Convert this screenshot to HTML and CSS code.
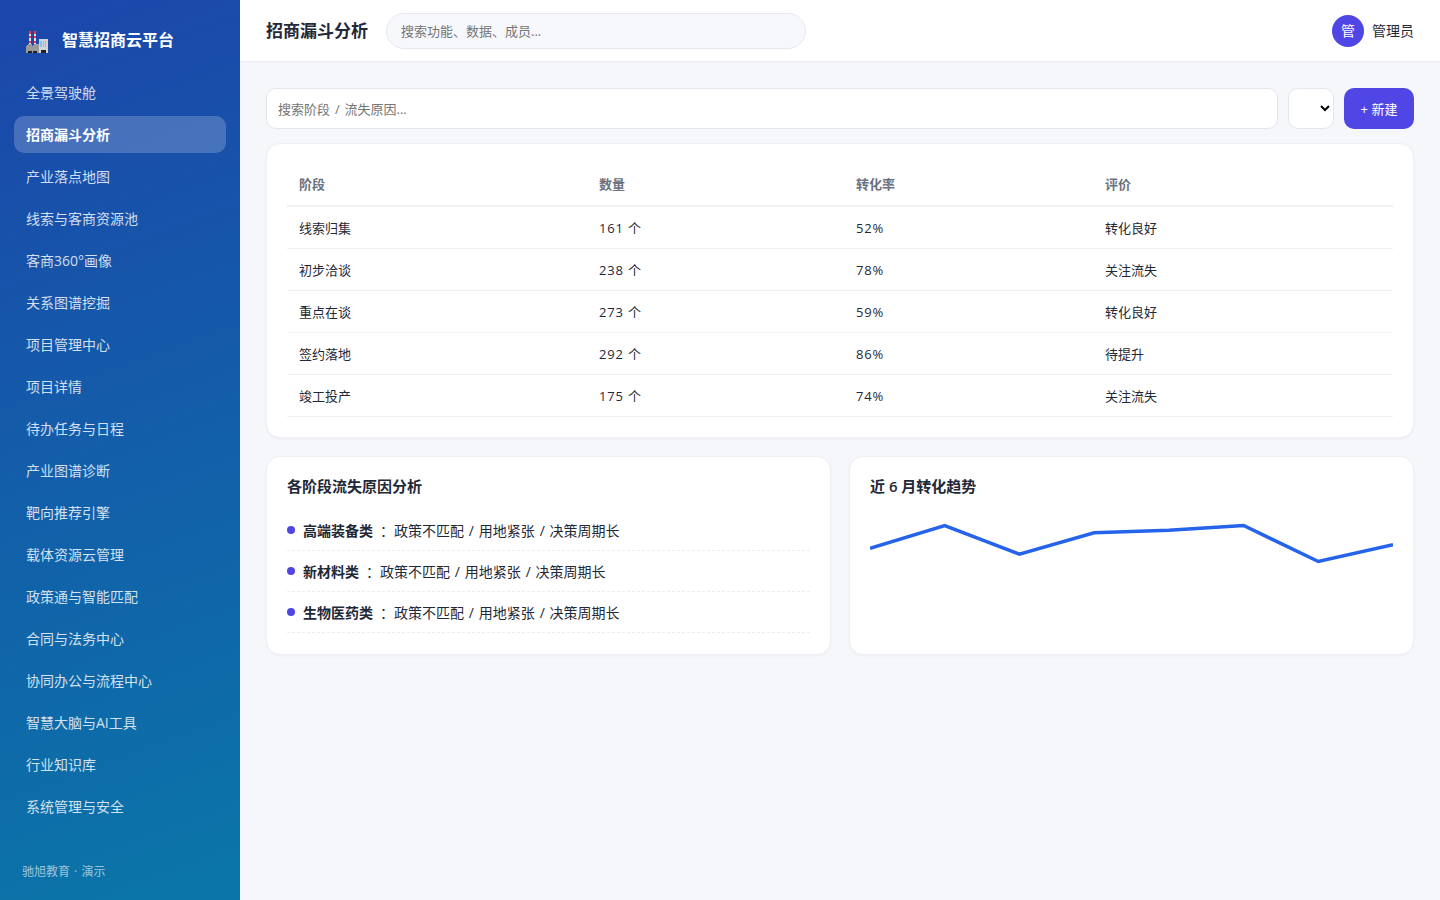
FILE: index.html
```html
<!DOCTYPE html>
<html lang="zh-CN">
<head>
    <meta charset="UTF-8">
    <meta name="viewport" content="width=device-width, initial-scale=1.0">
    <title>招商漏斗分析 - 智慧招商云平台</title>
    <link rel="stylesheet" href="styles.css">
</head>
<body>
    <aside class="sidebar">
        <div class="brand">
            <svg class="brand-icon" viewBox="0 0 22 22" width="22" height="22" shape-rendering="crispEdges">
                <path fill="#e1e2e6" d="M3 0h2v14H3zM8 0h2v14H8z"/>
                <path fill="#f03a3a" d="M3 0h2v3H3zM3 5h2v2H3zM3 10h2v2H3zM8 0h2v3H8zM8 5h2v2H8zM8 10h2v2H8z"/>
                <path fill="#9b9b9b" d="M0 15l3-2h3v2l3-2h4v9H0z"/>
                <path fill="#d3d4d8" d="M13 8h9v14h-9z"/>
                <path fill="#7cc4f5" d="M14 10h2v6h-2zM17 10h1v6h-1zM19 10h1v6h-1z"/>
                <path fill="#202124" d="M2 20h4v2H2zM7 20h4v2H7zM15 19h5v3h-5z"/>
            </svg>
            <span>智慧招商云平台</span>
        </div>
        <nav class="menu">
            <a class="menu-item">全景驾驶舱</a>
            <a class="menu-item active">招商漏斗分析</a>
            <a class="menu-item">产业落点地图</a>
            <a class="menu-item">线索与客商资源池</a>
            <a class="menu-item">客商360°画像</a>
            <a class="menu-item">关系图谱挖掘</a>
            <a class="menu-item">项目管理中心</a>
            <a class="menu-item">项目详情</a>
            <a class="menu-item">待办任务与日程</a>
            <a class="menu-item">产业图谱诊断</a>
            <a class="menu-item">靶向推荐引擎</a>
            <a class="menu-item">载体资源云管理</a>
            <a class="menu-item">政策通与智能匹配</a>
            <a class="menu-item">合同与法务中心</a>
            <a class="menu-item">协同办公与流程中心</a>
            <a class="menu-item">智慧大脑与AI工具</a>
            <a class="menu-item">行业知识库</a>
            <a class="menu-item">系统管理与安全</a>
        </nav>
        <div class="sidebar-foot">驰旭教育 · 演示</div>
    </aside>

    <div class="main">
        <header class="topbar">
            <h1>招商漏斗分析</h1>
            <input class="global-search" type="text" placeholder="搜索功能、数据、成员...">
            <div class="user">
                <span class="avatar">管</span>
                <span>管理员</span>
            </div>
        </header>

        <main class="content">
            <div class="toolbar">
                <input class="search" type="text" placeholder="搜索阶段 / 流失原因...">
                <select class="filter"></select>
                <button class="btn">+ 新建</button>
            </div>

            <section class="card table-card">
                <table>
                    <colgroup>
                        <col class="col-stage">
                        <col class="col-count">
                        <col class="col-rate">
                        <col>
                    </colgroup>
                    <thead>
                        <tr><th>阶段</th><th>数量</th><th>转化率</th><th>评价</th></tr>
                    </thead>
                    <tbody>
                        <tr><td>线索归集</td><td class="num">161 个</td><td class="num">52%</td><td>转化良好</td></tr>
                        <tr><td>初步洽谈</td><td class="num">238 个</td><td class="num">78%</td><td>关注流失</td></tr>
                        <tr><td>重点在谈</td><td class="num">273 个</td><td class="num">59%</td><td>转化良好</td></tr>
                        <tr><td>签约落地</td><td class="num">292 个</td><td class="num">86%</td><td>待提升</td></tr>
                        <tr><td>竣工投产</td><td class="num">175 个</td><td class="num">74%</td><td>关注流失</td></tr>
                    </tbody>
                </table>
            </section>

            <div class="grid">
                <section class="card">
                    <h3>各阶段流失原因分析</h3>
                    <ul class="list">
                        <li><i class="dot"></i><b>高端装备类</b><span>：政策不匹配 / 用地紧张 / 决策周期长</span></li>
                        <li><i class="dot"></i><b>新材料类</b><span>：政策不匹配 / 用地紧张 / 决策周期长</span></li>
                        <li><i class="dot"></i><b>生物医药类</b><span>：政策不匹配 / 用地紧张 / 决策周期长</span></li>
                    </ul>
                </section>
                <section class="card">
                    <h3>近 6 月转化趋势</h3>
                    <svg class="trend" viewBox="0 0 523 120">
                        <polyline points="0,36.3 74.7,13.5 149.4,42.2 224.1,20.8 298.9,18.3 373.6,13.5 448.3,49.5 523,32.8" fill="none" stroke="#2563eb" stroke-width="3.5"/>
                    </svg>
                </section>
            </div>
        </main>
    </div>
</body>
</html>
```
FILE: styles.css
```css
* {
    box-sizing: border-box;
}

body {
    margin: 0;
    display: flex;
    height: 100vh;
    overflow: hidden;
    background: #f5f7fb;
    color: #1f2937;
    font-family: "Open Sans", "Noto Sans CJK SC", sans-serif;
    font-size: 14px;
    line-height: 20px;
}

input,
select,
button {
    font-family: inherit;
    font-size: 13px;
}

.sidebar {
    width: 240px;
    flex-shrink: 0;
    display: flex;
    flex-direction: column;
    padding: 22px 14px 18px;
    background: linear-gradient(160deg, #1c46ab, #0a76a8);
    color: #fff;
}

.brand {
    display: flex;
    align-items: center;
    gap: 14px;
    height: 36px;
    padding-left: 12px;
    margin-bottom: 16px;
    font-size: 16px;
    font-weight: 600;
}

.brand-icon {
    margin-top: 4px;
}

.menu {
    display: flex;
    flex-direction: column;
    gap: 5px;
}

.menu-item {
    height: 37px;
    line-height: 37px;
    padding: 0 12px;
    border-radius: 10px;
    color: rgba(255, 255, 255, 0.82);
}

.menu-item.active {
    background: rgba(255, 255, 255, 0.2);
    color: #fff;
    font-weight: 600;
}

.sidebar-foot {
    margin-top: auto;
    padding-left: 8px;
    font-size: 12px;
    word-spacing: 1px;
    color: rgba(255, 255, 255, 0.6);
}

.main {
    flex: 1;
    min-width: 0;
}

.topbar {
    display: flex;
    align-items: center;
    height: 62px;
    padding: 0 26px;
    background: #fff;
    border-bottom: 1px solid #eef0f4;
}

.topbar h1 {
    margin: 0 18px 0 0;
    font-size: 17px;
    font-weight: 700;
}

.global-search {
    width: 420px;
    height: 36px;
    padding: 0 14px;
    border: 1px solid #e5e7ef;
    border-radius: 18px;
    background: #f7f8fc;
}

.user {
    display: flex;
    align-items: center;
    gap: 8px;
    margin-left: auto;
}

.avatar {
    width: 32px;
    height: 32px;
    line-height: 32px;
    border-radius: 50%;
    background: #4f46e5;
    color: #fff;
    text-align: center;
}

.content {
    padding: 26px;
}

.toolbar {
    display: flex;
    gap: 10px;
    height: 41px;
    margin-bottom: 14px;
}

.search {
    flex: 1;
    padding: 0 11px;
    border: 1px solid #e5e7ef;
    border-radius: 10px;
    background: #fff;
    word-spacing: 1.5px;
}

.filter {
    width: 46px;
    padding: 0 1px 0 0;
    border: 1px solid #e5e7ef;
    border-radius: 10px;
    background: #fff;
}

.btn {
    width: 70px;
    padding: 0;
    border: none;
    border-radius: 10px;
    background: #4f46e5;
    color: #fff;
}

.card {
    padding: 20px;
    border: 1px solid #eef0f4;
    border-radius: 14px;
    background: #fff;
    box-shadow: 0 1px 3px rgba(16, 24, 40, 0.04);
}

.table-card {
    height: 295px;
    margin-bottom: 18px;
}

table {
    width: 100%;
    table-layout: fixed;
    border-collapse: separate;
    border-spacing: 0;
    font-size: 13px;
}

.col-stage {
    width: 300px;
}

.col-count {
    width: 257px;
}

.col-rate {
    width: 249px;
}

th,
td {
    height: 42px;
    padding: 0 12px;
    text-align: left;
    border-bottom: 1px solid #eef0f4;
}

th {
    height: 43px;
    padding-bottom: 2px;
    color: #6b7280;
    font-weight: 600;
    border-bottom-width: 2px;
}

.num {
    letter-spacing: 0.8px;
}

.grid {
    display: grid;
    grid-template-columns: 1fr 1fr;
    gap: 18px;
}

.grid .card {
    height: 199px;
}

h3 {
    margin: 0 0 15px;
    font-size: 15px;
    line-height: 18px;
    font-weight: 600;
}

.list {
    margin: 0;
    padding: 0;
    list-style: none;
}

.list li {
    display: flex;
    align-items: center;
    height: 41px;
    padding-top: 1px;
    border-bottom: 1px dashed #eceef2;
    word-spacing: 1.2px;
}

.dot {
    width: 8px;
    height: 8px;
    margin: 0 8px 1px 0;
    border-radius: 50%;
    background: #4f46e5;
}

.list b {
    font-weight: 600;
    margin-right: 7px;
}

.trend {
    display: block;
    width: 100%;
    height: 120px;
    margin-top: 17px;
}
```
